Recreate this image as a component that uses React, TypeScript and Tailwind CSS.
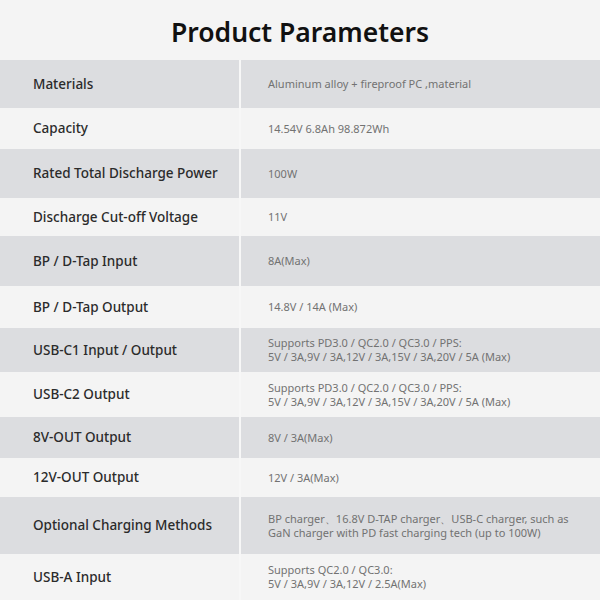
const rows = [
  { label: "Materials", value: ["Aluminum alloy + fireproof PC ,material"], h: "h-[48px]" },
  { label: "Capacity", value: ["14.54V 6.8Ah 98.872Wh"], h: "h-[41px]" },
  { label: "Rated Total Discharge Power", value: ["100W"], h: "h-[49px]" },
  { label: "Discharge Cut-off Voltage", value: ["11V"], h: "h-[38px]" },
  { label: "BP / D-Tap Input", value: ["8A(Max)"], h: "h-[50px]" },
  { label: "BP / D-Tap Output", value: ["14.8V / 14A (Max)"], h: "h-[42px]" },
  {
    label: "USB-C1 Input / Output",
    value: ["Supports PD3.0 / QC2.0 / QC3.0 / PPS:", "5V / 3A,9V / 3A,12V / 3A,15V / 3A,20V / 5A (Max)"],
    h: "h-[44px]",
  },
  {
    label: "USB-C2 Output",
    value: ["Supports PD3.0 / QC2.0 / QC3.0 / PPS:", "5V / 3A,9V / 3A,12V / 3A,15V / 3A,20V / 5A (Max)"],
    h: "h-[45px]",
  },
  { label: "8V-OUT Output", value: ["8V / 3A(Max)"], h: "h-[41px]" },
  { label: "12V-OUT Output", value: ["12V / 3A(Max)"], h: "h-[39px]" },
  {
    label: "Optional Charging Methods",
    value: ["BP charger、16.8V D-TAP charger、USB-C charger, such as", "GaN charger with PD fast charging tech (up to 100W)"],
    h: "h-[57px]",
  },
  {
    label: "USB-A Input",
    value: ["Supports QC2.0 / QC3.0:", "5V / 3A,9V / 3A,12V / 2.5A(Max)"],
    h: "h-[46px]",
  },
];

export default function App() {
  return (
    <div className="h-[600px] w-[600px] overflow-hidden bg-[#f4f4f4] font-['Noto_Sans',sans-serif]">
      {/* title */}
      <div className="flex h-[60px] items-center justify-center pt-[6px]">
        <h1 className="text-[26.5px] font-semibold text-[#111]">Product Parameters</h1>
      </div>

      {/* table */}
      <div className="flex flex-col">
        {rows.map((row, i) => (
          <div
            key={row.label}
            className={`flex ${row.h} ${i % 2 === 0 ? "bg-[#dcdde0]" : "bg-[#f4f4f4]"}`}
          >
            <div className="flex w-[239px] items-center pl-[33px] text-[13.5px] font-medium text-[#2b2b2b]">
              {row.label}
            </div>
            <div className="w-[2px] bg-[#f7f7f7]" />
            <div className="flex flex-1 flex-col justify-center pl-[27px] text-[11px] leading-[14px] text-[#727272]">
              {row.value.map((line) => (
                <span key={line}>{line}</span>
              ))}
            </div>
          </div>
        ))}
      </div>
    </div>
  );
}
